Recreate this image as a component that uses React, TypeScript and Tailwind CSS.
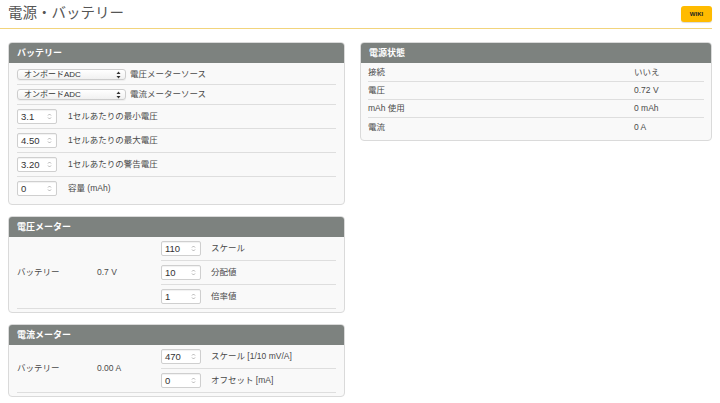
import React from 'react';

const Spinner = () => (
  <svg width="5" height="9" viewBox="0 0 5 9" className="shrink-0">
    <path d="M1 3.5L2.5 2L4 3.5" fill="none" stroke="#a0a0a0" strokeWidth="0.8" />
    <path d="M1 5.5L2.5 7L4 5.5" fill="none" stroke="#a0a0a0" strokeWidth="0.8" />
  </svg>
);

const SelectArrows = () => (
  <svg width="5" height="8" viewBox="0 0 5 8" className="shrink-0">
    <polygon points="2.5,0.5 4.5,3 0.5,3" fill="#333" />
    <polygon points="0.5,5 4.5,5 2.5,7.5" fill="#333" />
  </svg>
);

const NumBox = ({ value }: { value: string }) => (
  <div className="flex h-[15px] w-[40px] shrink-0 items-center justify-between rounded-[2px] border border-[#cfcfcf] bg-white pl-[3px] pr-[4px] text-[9.5px] leading-none text-[#333] shadow-[inset_0_1px_1px_rgba(0,0,0,0.06)]">
    <span>{value}</span>
    <Spinner />
  </div>
);

const SelectBox = ({ value }: { value: string }) => (
  <div className="flex h-[11px] w-[109px] shrink-0 items-center justify-between rounded-[3px] border border-[#cdcdcd] bg-gradient-to-b from-white to-[#f1f1f1] pl-[6px] pr-[4px] text-[8px] leading-none text-[#333] shadow-[0_1px_1px_rgba(0,0,0,0.05)]">
    <span>{value}</span>
    <SelectArrows />
  </div>
);

const Panel = ({ title, children }: { title: string; children: React.ReactNode }) => (
  <div className="overflow-hidden rounded-[4px] border border-[#dadada] bg-[#f9f9f9]">
    <div className="flex h-[20px] items-center bg-[#7d827f] px-2 text-[9px] font-bold leading-none text-white">{title}</div>
    {children}
  </div>
);

const SelectRow = ({ value, label }: { value: string; label: string }) => (
  <div className="flex items-center border-b border-[#dedede] py-[4px]">
    <SelectBox value={value} />
    <span className="ml-[4px] text-[8.5px] leading-none">{label}</span>
  </div>
);

const InputRow = ({ value, label, last }: { value: string; label: string; last?: boolean }) => (
  <div className={`flex items-center py-[4px] ${last ? '' : 'border-b border-[#dedede]'}`}>
    <NumBox value={value} />
    <span className="ml-[11px] text-[8.5px] leading-none">{label}</span>
  </div>
);

const MeterRow = ({ value, label, last }: { value: string; label: string; last?: boolean }) => (
  <div className={`flex items-center py-[4px] ${last ? '' : 'border-b border-[#dedede]'}`}>
    <NumBox value={value} />
    <span className="ml-[10px] text-[8.5px] leading-none">{label}</span>
  </div>
);

const Meter = ({
  title,
  reading,
  rows,
}: {
  title: string;
  reading: string;
  rows: { value: string; label: string }[];
}) => (
  <Panel title={title}>
    <div className="px-2 pb-[3px]">
      <div className="flex items-center border-b border-[#dedede] text-[8.5px] leading-none">
        <div className="w-[80px]">バッテリー</div>
        <div className="w-[64px]">{reading}</div>
        <div className="flex flex-1 flex-col">
          {rows.map((r, i) => (
            <MeterRow key={r.label} value={r.value} label={r.label} last={i === rows.length - 1} />
          ))}
        </div>
      </div>
    </div>
  </Panel>
);

const status = [
  { k: '接続', v: 'いいえ' },
  { k: '電圧', v: '0.72 V' },
  { k: 'mAh 使用', v: '0 mAh' },
  { k: '電流', v: '0 A' },
];

export default function App() {
  return (
    <div className="h-[403px] w-[720px] overflow-hidden bg-white font-['Liberation_Sans','Noto_Sans_CJK_JP',sans-serif] text-[#4a4a4a]">
      <div className="mr-2 flex h-[29px] items-center justify-between border-b border-[#f2d47c] pl-2">
        <h1 className="text-[14.5px] text-[#555]">電源・バッテリー</h1>
        <button className="flex h-[16px] w-[31px] items-center justify-center rounded-[3px] bg-[#ffbb00] text-[6px] font-bold text-[#222] shadow-[0_1px_1px_rgba(0,0,0,0.15)]">
          WIKI
        </button>
      </div>

      <div className="flex gap-[15px] px-2 pt-[13px]">
        <div className="flex w-[337px] flex-col gap-[11px]">
          <Panel title="バッテリー">
            <div className="px-2 pb-[4px] pt-[2px]">
              <SelectRow value="オンボードADC" label="電圧メーターソース" />
              <SelectRow value="オンボードADC" label="電流メーターソース" />
              <InputRow value="3.1" label="1セルあたりの最小電圧" />
              <InputRow value="4.50" label="1セルあたりの最大電圧" />
              <InputRow value="3.20" label="1セルあたりの警告電圧" />
              <InputRow value="0" label="容量 (mAh)" last />
            </div>
          </Panel>

          <Meter
            title="電圧メーター"
            reading="0.7 V"
            rows={[
              { value: '110', label: 'スケール' },
              { value: '10', label: '分配値' },
              { value: '1', label: '倍率値' },
            ]}
          />

          <Meter
            title="電流メーター"
            reading="0.00 A"
            rows={[
              { value: '470', label: 'スケール [1/10 mV/A]' },
              { value: '0', label: 'オフセット [mA]' },
            ]}
          />
        </div>

        <div className="flex-1 self-start">
          <Panel title="電源状態">
            <div className="px-[7px] pb-[4px] pt-[1px] text-[8.5px] leading-none">
              {status.map((s, i) => (
                <div
                  key={s.k}
                  className={`flex h-[18px] items-center ${i === status.length - 1 ? '' : 'border-b border-[#dedede]'}`}
                >
                  <span className="flex-1">{s.k}</span>
                  <span className="w-[70px]">{s.v}</span>
                </div>
              ))}
            </div>
          </Panel>
        </div>
      </div>
    </div>
  );
}
